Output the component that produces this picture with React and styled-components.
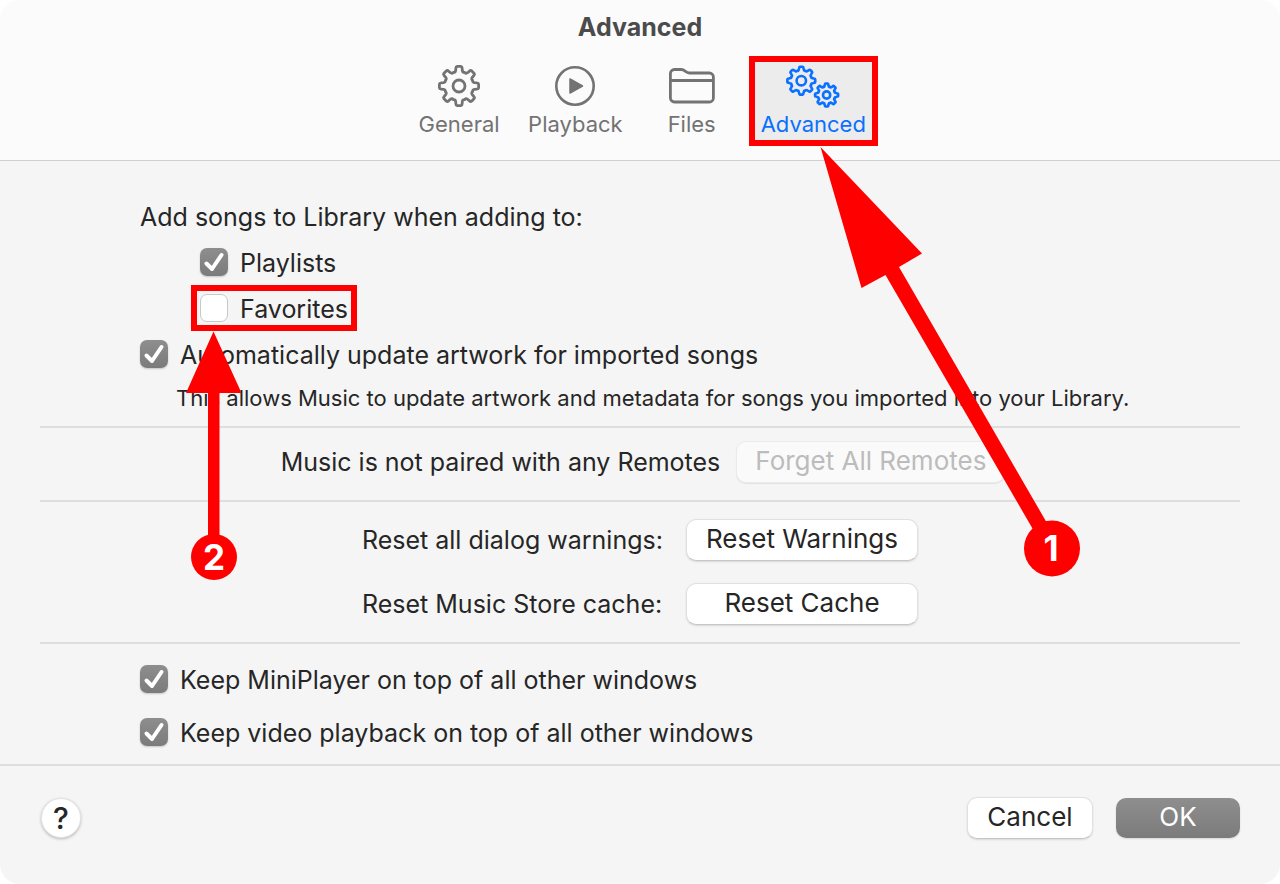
import React, { useState } from 'react';
import styled, { createGlobalStyle } from 'styled-components';

const GlobalStyle = createGlobalStyle`
  * {
    box-sizing: border-box;
  }
  body {
    margin: 0;
    background: #ffffff;
    font-family: Inter, "Liberation Sans", sans-serif;
    color: #262626;
  }
  button,
  input {
    font-family: inherit;
    margin: 0;
  }
`;

const Window = styled.div`
  display: flex;
  flex-direction: column;
  min-height: 100vh;
  background: #f5f5f5;
  border-radius: 20px;
  overflow: hidden;
`;

const Header = styled.header`
  display: flex;
  flex-direction: column;
  align-items: center;
  gap: 14px;
  padding: 12px 20px 14px;
  background: #fbfbfb;
  border-bottom: 1px solid #cfcfcf;
`;

const Title = styled.h1`
  margin: 0;
  font-size: 25px;
  line-height: 30px;
  font-weight: 700;
  color: #4b4b4b;
`;

const Tabs = styled.nav`
  display: flex;
  gap: 14px;
  padding-left: 2px;
`;

const Tab = styled.button`
  position: relative;
  display: flex;
  flex-direction: column;
  align-items: center;
  min-width: 98px;
  height: 90px;
  padding: 6px;
  border: none;
  background: ${(props) => (props.$active ? '#ececec' : 'transparent')};
  color: ${(props) => (props.$active ? '#0a70ff' : '#737373')};
  font-size: 22px;
  line-height: 28px;
`;

const TabIcon = styled.svg`
  display: block;
  width: ${(props) => props.$width}px;
  height: 48px;
  fill: none;
  stroke: currentColor;
`;

const Highlight = styled.span`
  position: absolute;
  inset: ${(props) => props.$inset};
  border: 6px solid #ff0000;
  pointer-events: none;
`;

const Arrow = styled.svg`
  position: absolute;
  z-index: 2;
  top: 100%;
  left: ${(props) => props.$left}px;
  fill: #ff0000;
  pointer-events: none;
`;

const StepNumber = styled.text`
  fill: #ffffff;
  font-family: Inter, "Liberation Sans", sans-serif;
  font-size: ${(props) => props.$size}px;
  font-weight: 700;
  text-anchor: middle;
`;

const Content = styled.main`
  flex: 1;
  padding: 0 40px;
`;

const Section = styled.section`
  display: flex;
  flex-direction: column;
  padding: ${(props) => props.$padding};
  gap: ${(props) => props.$gap || 0}px;
  border-bottom: ${(props) => (props.$last ? 'none' : '2px solid #dedede')};
`;

const Text = styled.p`
  margin: 0;
  font-size: 25px;
  line-height: 32px;
`;

const Note = styled.p`
  margin: 0 0 0 36px;
  font-size: 22px;
  line-height: 26px;
`;

const Options = styled.div`
  display: flex;
  flex-direction: column;
  align-items: flex-start;
  gap: 14px;
  padding-left: 60px;
`;

const OptionLabel = styled.label`
  position: relative;
  display: flex;
  align-items: center;
  gap: 12px;
  font-size: 25px;
  line-height: 32px;
`;

const CheckWrap = styled.span`
  display: grid;
  width: 28px;
  height: 28px;
  margin-bottom: 2px;

  > * {
    grid-area: 1 / 1;
  }
`;

const CheckInput = styled.input`
  appearance: none;
  width: 28px;
  height: 28px;
  border: 1px solid #c8c8c8;
  border-radius: 7px;
  background: #ffffff;

  &:checked {
    border: none;
    background: linear-gradient(#8e8e8e, #7b7b7b);
    box-shadow: 0 1px 2px rgba(0, 0, 0, 0.2);
  }
`;

const Tick = styled.svg`
  width: 28px;
  height: 28px;
  fill: none;
  stroke: #ffffff;
  stroke-width: 4;
  stroke-linecap: round;
  stroke-linejoin: round;
  pointer-events: none;
`;

const CenterRow = styled.div`
  display: flex;
  justify-content: center;
  align-items: center;
  gap: 16px;
`;

const ResetGrid = styled.div`
  display: grid;
  grid-template-columns: 308px 232px;
  justify-content: center;
  align-items: center;
  gap: 22px 16px;
`;

const Button = styled.button`
  min-width: ${(props) => props.$width || 0}px;
  height: 42px;
  padding: 0 18px 3px;
  border: 1px solid #e0e0e0;
  border-bottom-color: #c6c6c6;
  border-radius: 10px;
  background: #ffffff;
  box-shadow: 0 1px 2px rgba(0, 0, 0, 0.12);
  color: #262626;
  font-size: 26px;
  line-height: 32px;

  &:disabled {
    border-color: #ebebeb;
    background: #fafafa;
    box-shadow: 0 1px 1px rgba(0, 0, 0, 0.08);
    color: #bcbcbc;
  }
`;

const PrimaryButton = styled(Button)`
  height: 40px;
  border: none;
  background: linear-gradient(#8e8e8e, #7b7b7b);
  color: #ffffff;
`;

const HelpButton = styled.button`
  width: 40px;
  height: 40px;
  padding: 0;
  border: 1px solid #e4e4e4;
  border-radius: 50%;
  background: #ffffff;
  box-shadow: 0 1px 3px rgba(0, 0, 0, 0.25);
  color: #262626;
  font-size: 30px;
  font-weight: 500;
  line-height: 38px;
`;

const Footer = styled.footer`
  display: flex;
  justify-content: space-between;
  align-items: center;
  height: 120px;
  padding: 0 40px 14px 41px;
  border-top: 2px solid #dedede;
`;

const Actions = styled.div`
  display: flex;
  align-items: center;
  gap: 23px;
`;

// Closed outline of a cog: outer radius r, valleys at root
const gearPath = (cx, cy, r, root, teeth) => {
  const step = (Math.PI * 2) / teeth;
  const point = (radius, angle) =>
    `${(cx + radius * Math.sin(angle)).toFixed(2)} ${(cy - radius * Math.cos(angle)).toFixed(2)}`;
  let d = '';
  for (let i = 0; i < teeth; i += 1) {
    const a = i * step;
    d += `${i === 0 ? 'M' : 'L'}${point(root + 1, a - step * 0.27)}`;
    d += `L${point(r - 1.5, a - step * 0.22)}`;
    d += `Q${point(r, a - step * 0.2)} ${point(r, a - step * 0.12)}`;
    d += `L${point(r, a + step * 0.12)}`;
    d += `Q${point(r, a + step * 0.2)} ${point(r - 1.5, a + step * 0.22)}`;
    d += `L${point(root + 1, a + step * 0.27)}`;
    d += `Q${point(root - 1, a + step * 0.34)} ${point(root, a + step * 0.5)}`;
    d += `Q${point(root - 1, a + step * 0.66)} ${point(root + 1, a + step * 0.73)}`;
  }
  return `${d}Z`;
};

const GearIcon = () => (
  <TabIcon $width={48} viewBox="0 0 48 48" strokeWidth="2.8" strokeLinejoin="round">
    <path d={gearPath(24, 24, 19.7, 14.8, 8)} />
    <circle cx="24" cy="24" r="6" />
  </TabIcon>
);

const PlayIcon = () => (
  <TabIcon $width={48} viewBox="0 0 48 48" strokeWidth="2.6" strokeLinejoin="round">
    <circle cx="24" cy="24" r="18.7" />
    <path d="M19 17 31.5 24 19 31Z" fill="currentColor" strokeWidth="1.5" />
  </TabIcon>
);

const FolderIcon = () => (
  <TabIcon $width={48} viewBox="0 0 48 48" strokeWidth="2.8" strokeLinejoin="round">
    <path d="M2.4 11.5a4 4 0 0 1 4-4h7c3.5 0 4 3.5 8 3.5h20a4 4 0 0 1 4 4v21a4 4 0 0 1-4 4h-35a4 4 0 0 1-4-4Z" />
    <path d="M2.4 18.5h43" />
  </TabIcon>
);

const GearsIcon = () => (
  <TabIcon $width={56} viewBox="0 0 56 48" strokeWidth="2.6" strokeLinejoin="round">
    <path d={gearPath(16.3, 18.7, 14, 10.8, 8)} />
    <circle cx="16.3" cy="18.7" r="4.7" />
    <path d={gearPath(41.6, 33, 11.6, 8.8, 8)} />
    <circle cx="41.6" cy="33" r="3.6" />
  </TabIcon>
);

const StepOneArrow = () => (
  <Arrow $left={65} width="262" height="432" viewBox="0 0 262 432" aria-hidden="true">
    <path d="M0.5 1 102 107.5 79 121 231 384 218 392 65.5 129 41.5 142Z" />
    <circle cx="232" cy="402.5" r="28" />
    <StepNumber x="231" y="415" $size={35}>1</StepNumber>
  </Arrow>
);

const StepTwoArrow = () => (
  <Arrow $left={-16} width="60" height="256" viewBox="0 0 60 256" aria-hidden="true">
    <path d="M29.5 6.5 57.5 68H35.5V216H24V68H2Z" />
    <circle cx="30" cy="232" r="23" />
    <StepNumber x="30" y="245" $size={35}>2</StepNumber>
  </Arrow>
);

const Option = ({ id, label, defaultChecked = false, children }) => {
  const [checked, setChecked] = useState(defaultChecked);

  return (
    <OptionLabel htmlFor={id}>
      <CheckWrap>
        <CheckInput
          type="checkbox"
          id={id}
          checked={checked}
          onChange={(event) => setChecked(event.target.checked)}
        />
        {checked && (
          <Tick viewBox="0 0 28 28">
            <path d="M6.5 15.5 12 21 21.5 7" />
          </Tick>
        )}
      </CheckWrap>
      {label}
      {children}
    </OptionLabel>
  );
};

const App = () => (
  <>
    <GlobalStyle />
    <Window>
      <Header>
        <Title>Advanced</Title>
        <Tabs>
          <Tab type="button"><GearIcon />General</Tab>
          <Tab type="button"><PlayIcon />Playback</Tab>
          <Tab type="button"><FolderIcon />Files</Tab>
          <Tab type="button" $active>
            <GearsIcon />
            Advanced
            <Highlight $inset="0 -6px" />
            <StepOneArrow />
          </Tab>
        </Tabs>
      </Header>

      <Content>
        <Section $padding="40px 0 15px 100px" $gap={14}>
          <Text>Add songs to Library when adding to:</Text>
          <Options>
            <Option id="playlists" label="Playlists" defaultChecked />
            <Option id="favorites" label="Favorites">
              <Highlight $inset="-8px -9px -6px -9px" />
              <StepTwoArrow />
            </Option>
          </Options>
          <Option id="artwork" label="Automatically update artwork for imported songs" defaultChecked />
          <Note>This allows Music to update artwork and metadata for songs you imported into your Library.</Note>
        </Section>

        <Section $padding="13px 0 17px 6px">
          <CenterRow>
            <Text>Music is not paired with any Remotes</Text>
            <Button type="button" disabled>Forget All Remotes</Button>
          </CenterRow>
        </Section>

        <Section $padding="17px 0">
          <ResetGrid>
            <Text>Reset all dialog warnings:</Text>
            <Button type="button">Reset Warnings</Button>
            <Text>Reset Music Store cache:</Text>
            <Button type="button">Reset Cache</Button>
          </ResetGrid>
        </Section>

        <Section $padding="20px 0 15px 100px" $gap={21} $last>
          <Option id="miniplayer" label="Keep MiniPlayer on top of all other windows" defaultChecked />
          <Option id="video" label="Keep video playback on top of all other windows" defaultChecked />
        </Section>
      </Content>

      <Footer>
        <HelpButton type="button" aria-label="Help">?</HelpButton>
        <Actions>
          <Button type="button" $width={126}>Cancel</Button>
          <PrimaryButton type="button" $width={124}>OK</PrimaryButton>
        </Actions>
      </Footer>
    </Window>
  </>
);

export default App;
